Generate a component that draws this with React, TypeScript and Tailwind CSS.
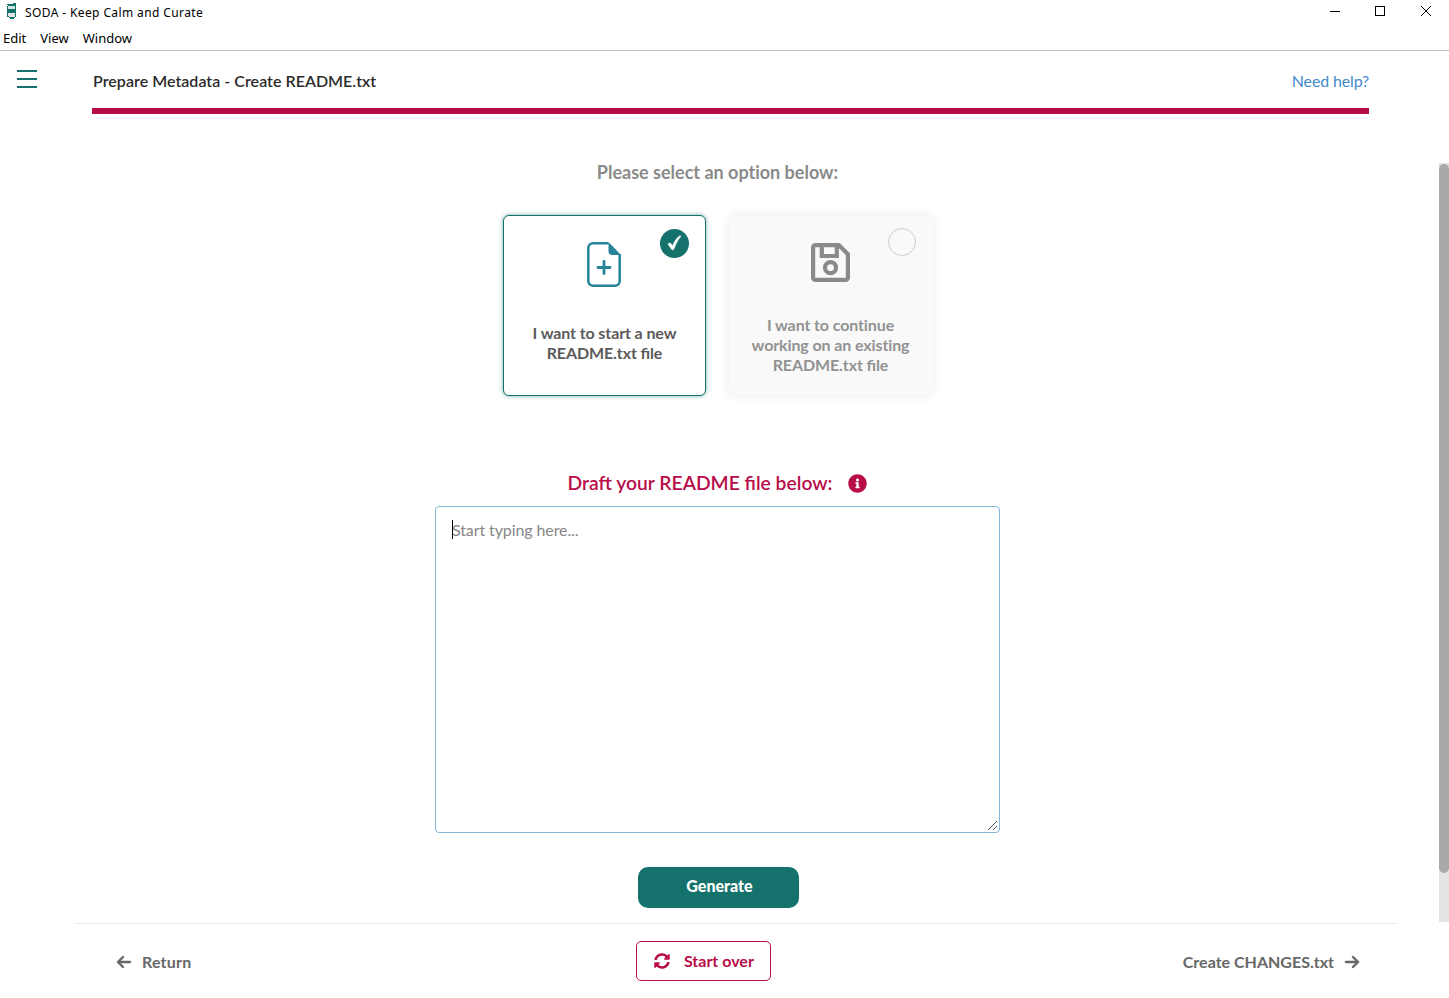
import React from "react";
import { FaInfoCircle, FaSyncAlt } from "react-icons/fa";
import { FaArrowLeft, FaArrowRight } from "react-icons/fa6";

function SodaCan() {
  return (
    <svg className="block h-4 w-3" viewBox="0 0 12 16" shapeRendering="crispEdges">
      <path d="M7 0h3v1H7zM1 1h9v1H1zM2 2h8v12H9v1H8v1H4v-1H3v-1H1V3h1z" fill="#14716c" />
      <path d="M2 3h7v3H2z" fill="#d5e6e5" />
      <path d="M2 10h7v4H3v-1H2z" fill="#e6e2e2" />
    </svg>
  );
}

function TitleBar() {
  return (
    <div className="flex h-[25px] items-start justify-between pl-[6px] pt-[3px]">
      <div className="flex items-start">
        <SodaCan />
        <span className="ml-[7px] mt-px font-['Noto_Sans',sans-serif] text-[12px] leading-[18px] tracking-[0.39px] text-black">
          SODA - Keep Calm and Curate
        </span>
      </div>
      <svg className="block h-4 w-[120px]" viewBox="0 0 120 16" fill="none" stroke="#000">
        <path d="M1 8.500h10M46.500 3.500h9v9h-9z" shapeRendering="crispEdges" />
        <path d="M92 3l10 10M102 3L92 13" />
      </svg>
    </div>
  );
}

function MenuBar() {
  return (
    <div className="flex h-[26px] gap-[14px] border-b border-[#bfbfbf] pl-[3px] font-['Noto_Sans',sans-serif] text-[13px] leading-[26px] text-black">
      <span>Edit</span>
      <span>View</span>
      <span>Window</span>
    </div>
  );
}

function Header() {
  return (
    <header className="flex h-[63px]">
      <div className="flex w-[92px] flex-col gap-[6px] pl-[17px] pt-[19px]">
        <div className="h-[2px] w-[20px] bg-[#14716c]" />
        <div className="h-[2px] w-[20px] bg-[#14716c]" />
        <div className="h-[2px] w-[20px] bg-[#14716c]" />
      </div>
      <div className="flex w-[1277px] justify-between border-b-[6px] border-[#b80d49] pl-px pt-[20px] text-[16px] leading-[20px]">
        <span className="font-semibold tracking-[0.03px] text-[#2b2b2b]">Prepare Metadata - Create README.txt</span>
        <a className="tracking-[-0.15px] text-[#428bca]">Need help?</a>
      </div>
    </header>
  );
}

function NewFileIcon() {
  return (
    <svg className="mr-px block h-[45px] w-[34px]" viewBox="0 0 34 45" fill="none" stroke="#25839a">
      <path
        d="M21.500 1.300H6A4.700 4.700 0 0 0 1.300 6v33A4.700 4.700 0 0 0 6 43.700h22a4.700 4.700 0 0 0 4.700-4.700V12"
        strokeWidth="2.500"
      />
      <path d="M21.500 0L34 13h-8.500a4 4 0 0 1-4-4z" fill="#25839a" stroke="none" />
      <path d="M17 19.500v12M11 25.500h12" strokeWidth="2.800" strokeLinecap="round" />
    </svg>
  );
}

function SaveIcon() {
  return (
    <svg className="mr-[2px] block h-[39px] w-[39px]" viewBox="0 0 39 39" fill="none" stroke="#8a8a8a" strokeWidth="4.200">
      <path d="M4.500 2.100h23.300l9.100 9.100v23.300a2.400 2.400 0 0 1-2.400 2.400h-30a2.400 2.400 0 0 1-2.400-2.400v-30a2.400 2.400 0 0 1 2.400-2.400z" />
      <path d="M10.800 2v11H25.800V2" />
      <circle cx="19.500" cy="24.700" r="5.500" strokeWidth="4.200" />
    </svg>
  );
}

function Options() {
  return (
    <div className="ml-px flex gap-[23px]">
      <div className="relative flex h-[181px] w-[203px] flex-col items-center rounded-[6px] border border-[#14716c] bg-white pt-[26px] text-center text-[16px] font-bold leading-[20px] tracking-[-0.11px] text-[#5b5b5b] shadow-[0_0_4px_rgba(20,113,108,0.6)] [font-feature-settings:'liga']">
        <NewFileIcon />
        <p className="mt-[36px] w-[160px]">I want to start a new README.txt file</p>
        <div className="absolute right-[16px] top-[13px] flex h-[29px] w-[29px] items-center justify-center rounded-full bg-[#14716c]">
          <svg className="h-[17px] w-[15px]" viewBox="0 0 15 17" fill="#fff" stroke="#fff" strokeWidth="0.600">
            <path d="M1 9.200c.8-1.200 2.300-1.500 3.100-.4L5.500 11C7.300 6.800 9.300 3.500 11.800 1.400c.8-.6 1.800-.6 2.200-.3C11 4.500 8.700 9 7 13.800c-.5 1.300-1.900 1.500-2.600.3z" />
          </svg>
        </div>
      </div>
      <div className="relative flex h-[181px] w-[204px] flex-col items-center rounded-[6px] bg-[#f9f9f9] pt-[28px] text-center text-[16px] font-bold leading-[20px] tracking-[-0.11px] text-[#929292] shadow-[0_0_10px_rgba(0,0,0,0.09)]">
        <SaveIcon />
        <p className="mr-px mt-[33px] w-[170px]">
          I want to continue working on an existing{" "}
          <span className="[font-feature-settings:'liga']">README.txt file</span>
        </p>
        <div className="absolute right-[17px] top-[13px] h-[28px] w-[28px] rounded-full border border-[#cfcfcf]" />
      </div>
    </div>
  );
}

function Draft() {
  return (
    <div className="relative mt-[11px]">
      <textarea
        placeholder="Start typing here..."
        className="block h-[327px] w-[565px] resize-none rounded-[4px] border border-[#85b7d9] bg-white px-4 py-[13px] text-[16px] leading-[20px] tracking-[-0.1px] outline-none placeholder:text-[#868686]"
      />
      <div className="absolute left-[17px] top-[14px] h-[19px] w-px bg-black" />
      <svg
        className="absolute bottom-[3px] right-[3px] h-[9px] w-[9px]"
        viewBox="0 0 9 9"
        fill="none"
        stroke="#555"
      >
        <path d="M0 9L9 0M5 9l4-4" />
      </svg>
    </div>
  );
}

function Footer() {
  return (
    <footer className="ml-[75px] flex h-[75px] w-[1322px] items-start justify-between border-t border-[#ebebeb] pl-[41px] pr-[37px] pt-[17px] text-[16px] font-bold text-[#676767]">
      <div className="flex h-[42px] w-[176px] items-center gap-[10px]">
        <FaArrowLeft className="h-4 w-4" stroke="currentColor" strokeWidth="16" />
        <span className="tracking-[0.2px]">Return</span>
      </div>
      <button className="mr-[68px] flex h-[40px] w-[135px] items-center rounded-[5px] border border-[#b80d49] pl-[17px] text-[#b80d49]">
        <FaSyncAlt className="h-4 w-4" />
        <span className="ml-[14px]">Start over</span>
      </button>
      <div className="flex h-[42px] items-center gap-[10px]">
        <span>Create CHANGES.txt</span>
        <FaArrowRight className="h-4 w-4" stroke="currentColor" strokeWidth="16" />
      </div>
    </footer>
  );
}

export default function App() {
  return (
    <div className="flex h-[998px] w-[1449px] flex-col overflow-hidden bg-white font-['Lato',sans-serif]">
      <TitleBar />
      <MenuBar />
      <Header />
      <main className="flex h-[809px]">
        <div className="flex w-[1435px] flex-col items-center">
          <h2 className="mt-[47px] text-[18px] font-bold leading-[22px] text-[#8a8a8a] [font-variant-ligatures:none]">
            Please select an option below:
          </h2>
          <div className="mt-[32px]">
            <Options />
          </div>
          <div className="mt-[75px] flex items-center gap-[16px] text-[#b80d49]">
            <span className="text-[19.3px] font-semibold leading-[24px]">Draft your README file below:</span>
            <FaInfoCircle className="h-[19px] w-[19px]" />
          </div>
          <Draft />
          <button className="ml-[2px] mt-[34px] h-[41px] w-[161px] rounded-[10px] bg-[#14716c] pb-[3px] pl-[2px] text-[16px] font-black leading-[20px] text-white">
            Generate
          </button>
        </div>
        <div className="ml-[4px] mt-[49px] h-[759px] w-[10px] bg-[#e4e4e4] pt-px">
          <div className="h-[709px] rounded-[5px] bg-[#a9a9a9]" />
        </div>
      </main>
      <Footer />
    </div>
  );
}
